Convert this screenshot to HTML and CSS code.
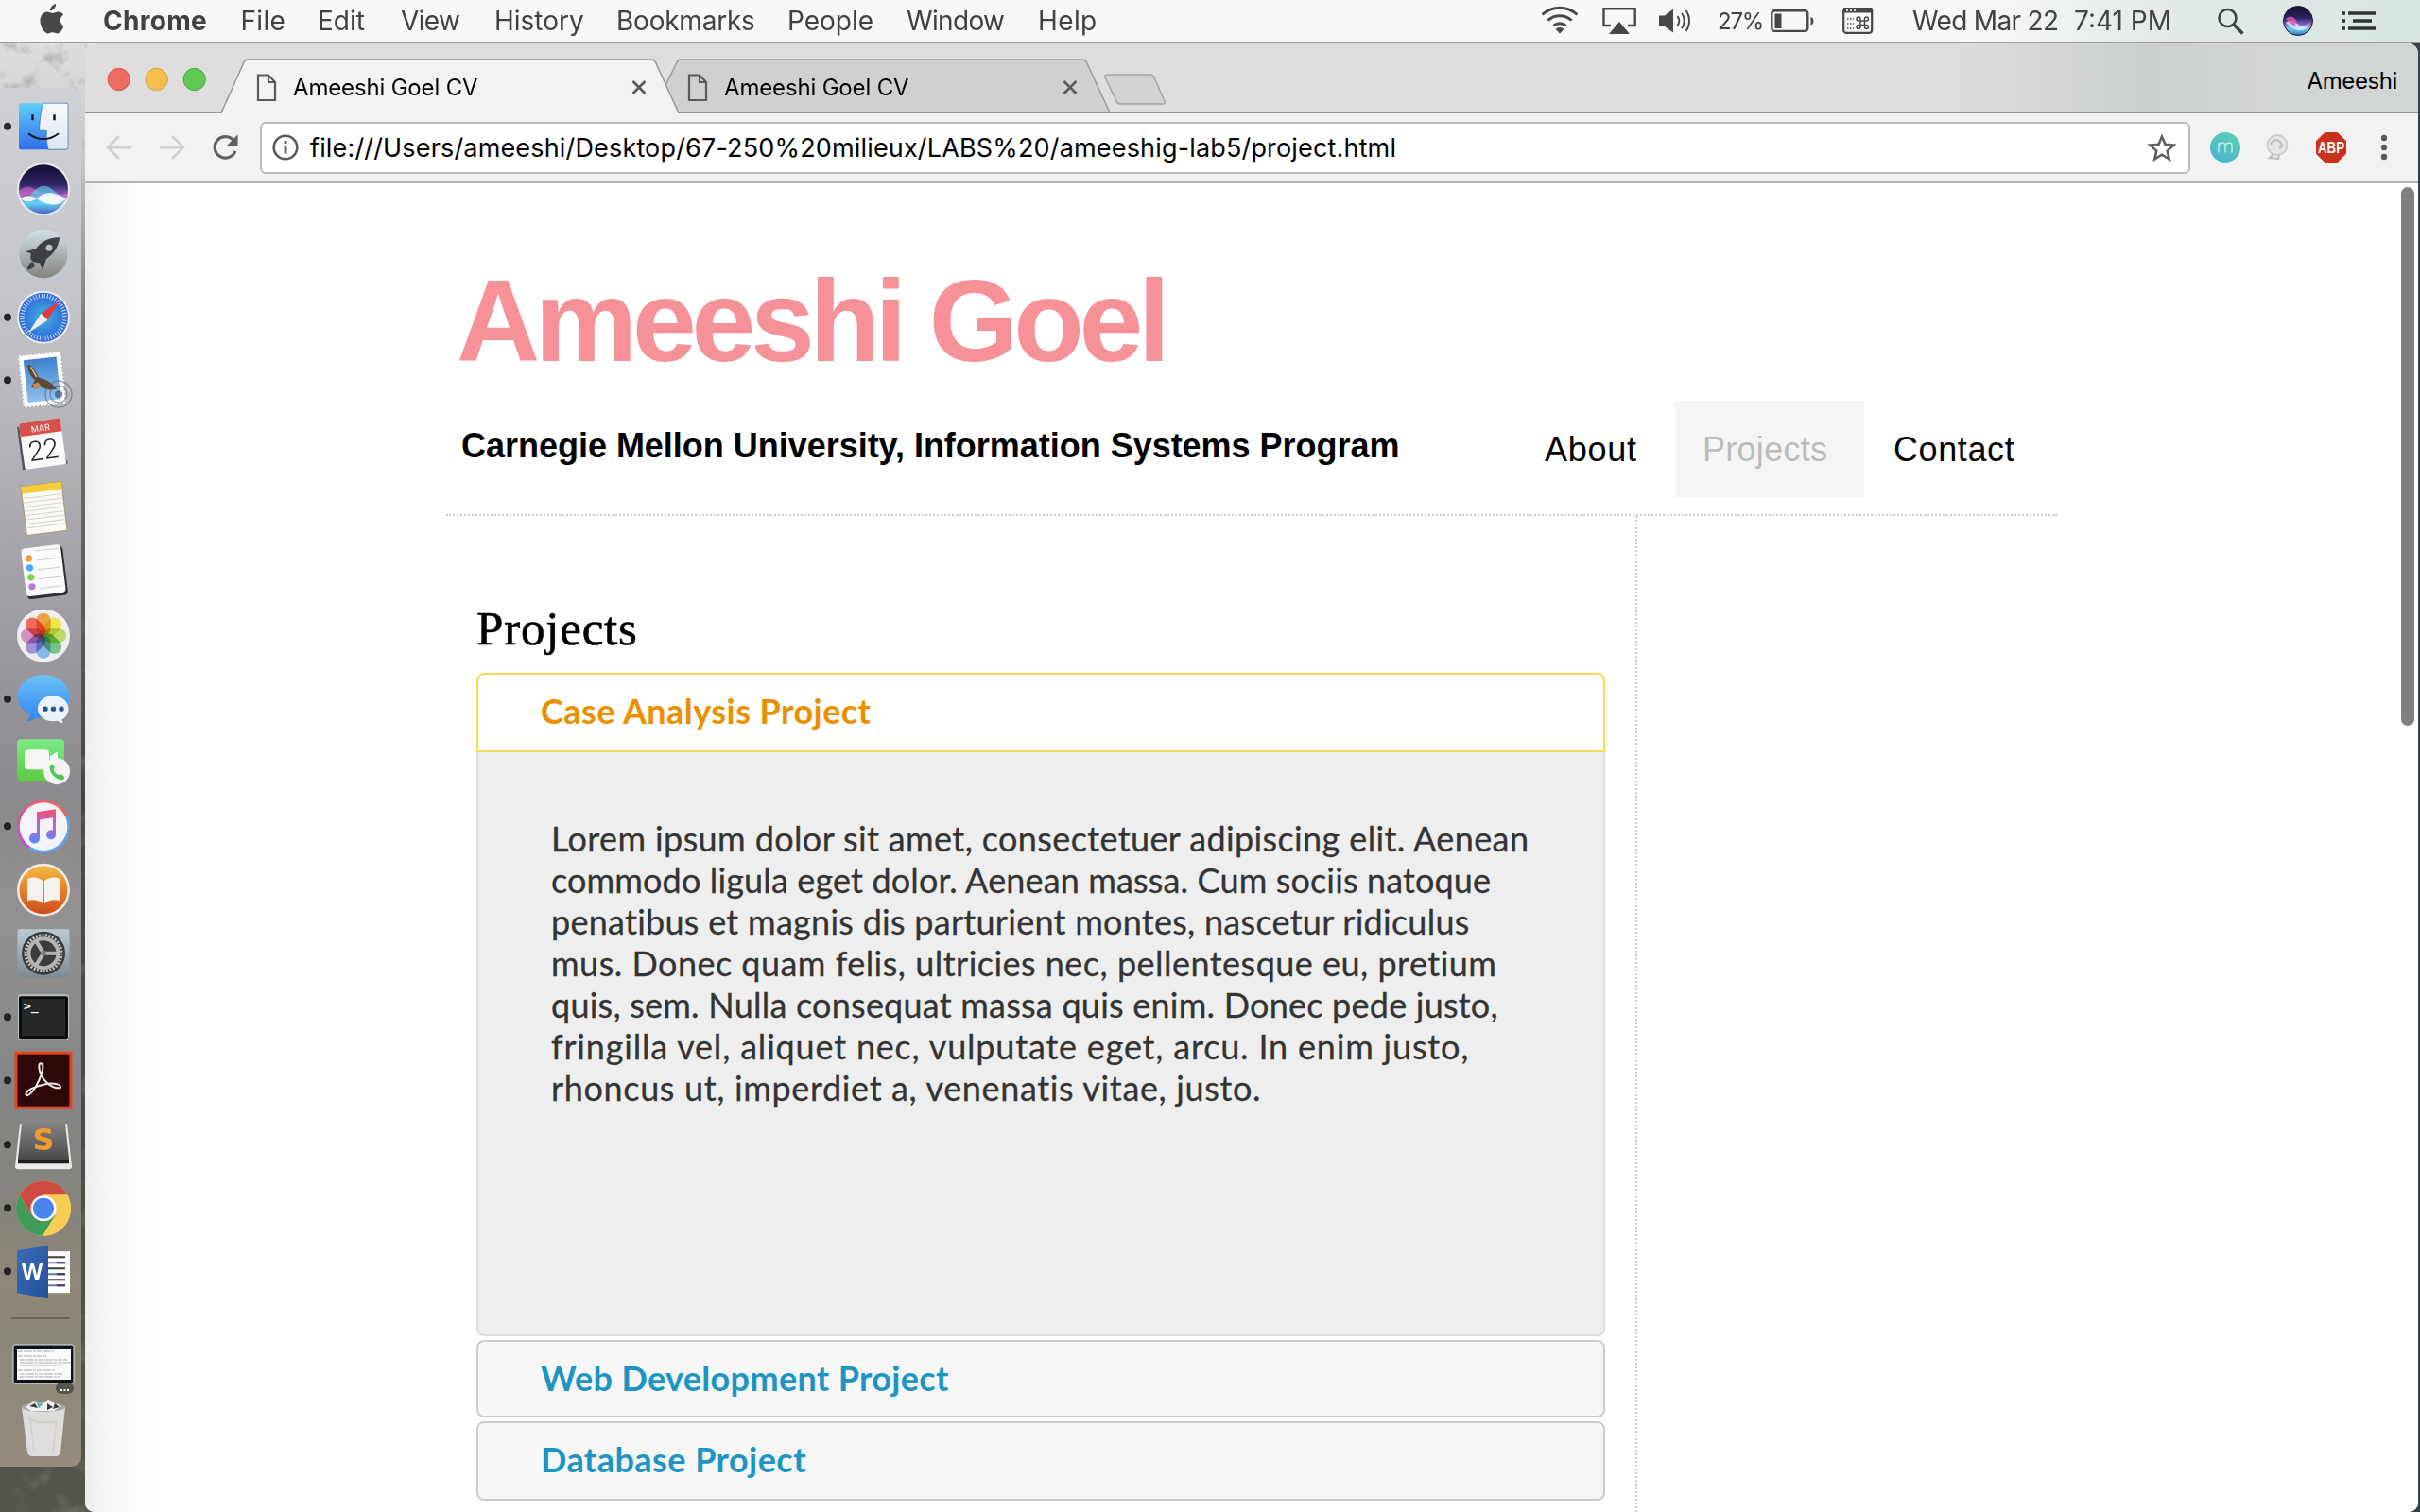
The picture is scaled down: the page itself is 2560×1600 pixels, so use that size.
FILE: index.html
```html
<!DOCTYPE html>
<html lang="en">
<head>
<meta charset="utf-8">
<title>Ameeshi Goel CV</title>
<link rel="stylesheet" href="styles.css">
</head>
<body>
<svg width="0" height="0" class="defs" aria-hidden="true">
  <defs>
    <linearGradient id="finder" x1="0" y1="0" x2="0" y2="1"><stop offset="0" stop-color="#5fcdfa"/><stop offset="1" stop-color="#2f6fea"/></linearGradient>
    <linearGradient id="finderR" x1="0" y1="0" x2="0" y2="1"><stop offset="0" stop-color="#f8f9fc"/><stop offset="1" stop-color="#dde6f2"/></linearGradient>
    <linearGradient id="siri" x1="0" y1="0" x2="0" y2="1"><stop offset="0" stop-color="#150c33"/><stop offset=".4" stop-color="#2a2260"/><stop offset=".62" stop-color="#8a5fc4"/><stop offset=".78" stop-color="#63d3f2"/><stop offset="1" stop-color="#4466c8"/></linearGradient>
    <linearGradient id="steel" x1="0" y1="0" x2="0" y2="1"><stop offset="0" stop-color="#d3e0e6"/><stop offset="1" stop-color="#84837f"/></linearGradient>
    <radialGradient id="safari"><stop offset="0" stop-color="#46b6d8"/><stop offset="1" stop-color="#2a63e0"/></radialGradient>
    <linearGradient id="sky" x1="0" y1="0" x2="0" y2="1"><stop offset="0" stop-color="#3f7fcf"/><stop offset="1" stop-color="#8fc2ee"/></linearGradient>
    <linearGradient id="msg" x1="0" y1="0" x2="0" y2="1"><stop offset="0" stop-color="#6cc3f6"/><stop offset="1" stop-color="#2f84f2"/></linearGradient>
    <linearGradient id="green" x1="0" y1="0" x2="0" y2="1"><stop offset="0" stop-color="#7bea86"/><stop offset="1" stop-color="#5acb43"/></linearGradient>
    <linearGradient id="ring" x1="0" y1="1" x2="1" y2="0"><stop offset="0" stop-color="#b34be6"/><stop offset=".5" stop-color="#e7548e"/><stop offset="1" stop-color="#f26a50"/></linearGradient>
    <linearGradient id="note" x1="0" y1="0" x2="0" y2="1"><stop offset="0" stop-color="#f0506a"/><stop offset=".5" stop-color="#b565d8"/><stop offset="1" stop-color="#4f8df5"/></linearGradient>
    <linearGradient id="book" x1="0" y1="0" x2="0" y2="1"><stop offset="0" stop-color="#f5b840"/><stop offset="1" stop-color="#d04c1c"/></linearGradient>
    <linearGradient id="prefs" x1="0" y1="0" x2="0" y2="1"><stop offset="0" stop-color="#bccbd3"/><stop offset="1" stop-color="#7f8992"/></linearGradient>
    <linearGradient id="sub" x1="0" y1="0" x2="0" y2="1"><stop offset="0" stop-color="#888"/><stop offset="1" stop-color="#4c4c4c"/></linearGradient>
    <linearGradient id="word" x1="0" y1="0" x2="1" y2="1"><stop offset="0" stop-color="#3d6cb8"/><stop offset="1" stop-color="#23509a"/></linearGradient>
    <linearGradient id="teal" x1="0" y1="1" x2=".6" y2="0"><stop offset="0" stop-color="#48b0d6"/><stop offset="1" stop-color="#58cdb0"/></linearGradient>
    <filter id="rough"><feTurbulence type="fractalNoise" baseFrequency=".035" numOctaves="4" seed="7"/><feColorMatrix values="0 0 0 0 .2  0 0 0 0 .2  0 0 0 0 .18  4 0 0 0 -2.2"/></filter>
  </defs>
</svg>

<header class="menubar">
  <svg class="apple" width="108" height="44" viewBox="0 0 108 44"><path fill="#474747" d="M59 4c.5 4-3 7.500-6 7.300C52.800 8 56 4.500 59 4zM67.500 27.500c-1.800 5-4.500 8-7 8-2 0-2.600-1.200-4.800-1.200S52.500 35.400 50.800 35.500c-3.600 0-8.300-7-8.300-13.500 0-6 3.600-9.500 7.500-9.500 2.300 0 4.100 1.500 5.600 1.500 1.400 0 3.600-1.600 6.300-1.600 2 0 4 1 5.300 3-4.800 2.800-4.100 9.800.3 12.100z"/></svg>
  <b class="m1">Chrome</b><span class="m2">File</span><span>Edit</span><span class="m3">View</span><span>History</span><span class="m4">Bookmarks</span><span>People</span><span class="m3">Window</span><span class="m5">Help</span>
  <svg width="42" height="44" viewBox="0 0 42 44"><g fill="none" stroke="#474747" stroke-width="3"><path d="M1.500 15.500a27 27 0 0 1 37 0M7.500 21.500a18.500 18.500 0 0 1 25 0M13.500 27.200a10 10 0 0 1 13 0"/></g><path fill="#474747" d="M20 35.500l-4.500-4.700a6.500 6.500 0 0 1 9 0z"/></svg>
  <svg width="38" height="44" viewBox="0 0 38 44"><path d="M9 27H1.500V9.200h33.200V27H27" fill="none" stroke="#474747" stroke-width="2.400"/><path d="M18 23l11 13H7z" fill="#474747"/></svg>
  <svg width="36" height="44" viewBox="0 0 36 44"><path d="M0 16.500h6L15 9.500v25L6 28H0z" fill="#474747"/><g fill="none" stroke="#474747" stroke-width="2"><path d="M19.500 17a8 8 0 0 1 0 10M24 14a13 13 0 0 1 0 16M28.500 11a19 19 0 0 1 0 22"/></g></svg>
  <span class="pct">27%</span>
  <svg width="48" height="44" viewBox="0 0 48 44"><rect x="1.300" y="11.300" width="38" height="21.600" rx="3" fill="none" stroke="#474747" stroke-width="2.400"/><path d="M4.500 14.500h7v15.500h-7zM42.500 18c4 1 4 7.500 0 8.500z" fill="#474747"/></svg>
  <svg width="34" height="44" viewBox="0 0 34 44"><rect x="1.200" y="9.200" width="30" height="25.600" rx="3" fill="none" stroke="#474747" stroke-width="2.200"/><path d="M1 8h30.500v5.500H1z" fill="#474747"/><path d="M4 11h2m2 0h2m2 0h2" stroke="#fff" stroke-width="1.600"/><path d="M5 20h7M5 25h7M5 30h7" stroke="#474747" stroke-width="1.500" stroke-dasharray="1.500 1.500"/><path d="M19 22h4.500v4.500H19zm0 0h-2a2 2 0 1 1 2-2zm4.500 0v-2a2 2 0 1 1 2 2zm0 4.500h2a2 2 0 1 1-2 2zm-4.500 0v2a2 2 0 1 1-2-2z" fill="none" stroke="#474747" stroke-width="1.500"/></svg>
  <span class="date">Wed Mar 22</span><span>7:41 PM</span>
  <svg width="30" height="44" viewBox="0 0 30 44"><circle cx="10.500" cy="19" r="9" fill="none" stroke="#3d4040" stroke-width="2.600"/><path d="M17 26l9.500 9.500" stroke="#3d4040" stroke-width="3.400"/></svg>
  <svg width="34" height="44" viewBox="0 0 34 44"><circle cx="16" cy="22" r="15.500" fill="url(#siri)" stroke="#1a1a30" stroke-width="1"/><path d="M3 24q6-5 12 1t14-1q-5 10-13 8T3 24z" fill="#dff6ff" opacity=".75"/><path d="M3 20q6-6 12 3l-3 5z" fill="#e05aa8" opacity=".8"/></svg>
  <svg width="40" height="44" viewBox="0 0 40 44"><path d="M6 14h29M11 22h20M6 30h29" stroke="#2d3333" stroke-width="3.600"/><path d="M0 14h3M0 22h3M0 30h3" stroke="#2d3333" stroke-width="3.600"/></svg>
</header>

<main class="desktop">
  <svg class="wall" width="92" height="1554"><rect width="92" height="1554" filter="url(#rough)" opacity=".45"/></svg>
  <nav class="dock">
    <svg viewBox="0 0 86 67"><circle class="dot" cx="8" cy="33.500" r="4"/><rect x="20" y="9" width="52" height="49" rx="2" fill="url(#finder)"/><path d="M46 9h24a2 2 0 0 1 2 2v45a2 2 0 0 1-2 2H51c-1.500-6-2-13-1.800-20H41.500C42 27 43 17 46 9z" fill="url(#finderR)" stroke="#2a5a9a" stroke-width=".6"/><path d="M34.500 21v6M57.500 21v6" stroke="#111" stroke-width="2.400"/><path d="M30 41q16 12 32 0" fill="none" stroke="#111" stroke-width="1.800"/></svg>
    <svg viewBox="0 0 86 67"><circle cx="46" cy="33" r="28" fill="#e9e9ee"/><circle cx="46" cy="33" r="26" fill="url(#siri)"/><path d="M20 35q8-9 20 0t32 2v6q-12 2-24-3t-27 1z" fill="#e56ac0" opacity=".55"/><path d="M30 42q14-20 26-8 8 6 15 10-18 10-41-2z" fill="#60d8f0" opacity=".6"/><path d="M21 43q9-6 18 0 8-7 16-6 8 2 15 6-8 8-16 6-8-1-15-6-9 6-18 0z" fill="#fff" opacity=".9"/></svg>
    <svg viewBox="0 0 86 67"><circle cx="46" cy="33.500" r="28" fill="#c3cacd"/><circle cx="46" cy="33.500" r="25.500" fill="url(#steel)"/><path d="M63 16c-12 0-20 5-25 12l-11 3 6 2c-1 3-1 5 0 7l2 2 7 1 3 7 4-11c8-6 13-13 14-23z" fill="#3c4044"/><circle cx="52" cy="27" r="3.500" fill="#b8c0c4"/><path d="M34 42c-3 1-5 4-5 8 4 0 7-2 8-5z" fill="#3c4044"/></svg>
    <svg viewBox="0 0 86 67"><circle class="dot" cx="8" cy="33.500" r="4"/><circle cx="46" cy="33.500" r="28" fill="#eceef0"/><circle cx="46" cy="33.500" r="26" fill="url(#safari)"/><circle cx="46" cy="33.500" r="22.500" fill="none" stroke="#cfe6f8" stroke-width="4.500" stroke-dasharray="1 1.950"/><path d="M63 16L50.500 36.500l-7-7z" fill="#e8383a"/><path d="M30 50l13.500-20.500 7 7z" fill="#eee"/></svg>
    <svg viewBox="0 0 86 67"><circle class="dot" cx="8" cy="33" r="4"/><g transform="rotate(-6 45 32)"><rect x="23" y="6" width="43" height="53" fill="#fff" stroke="#fff" stroke-width="2.500" stroke-dasharray="2 2"/><rect x="27" y="10" width="35" height="45" fill="url(#sky)"/><path d="M31 15c5 1 8 8 10 15 6 2 14 7 18 14-7 1-13-1-17-5-3 3-7 2-10 0 2-3 4-5 5-7-5-5-7-11-6-17z" fill="#5e4733"/><path d="M34 36l6-1 3 4-8 3z" fill="#c08a4e"/><path d="M34 18l5 11" stroke="#d8c8b0" stroke-width="1.500"/></g><g fill="none" stroke="#5c6472" stroke-width="1.300" opacity=".6"><circle cx="62" cy="48" r="14"/><circle cx="62" cy="48" r="9"/></g><circle cx="62" cy="48" r="4" fill="#3f5f90" opacity=".8"/></svg>
    <svg viewBox="0 0 86 67"><path d="M18 14l6 46 48-7-3-6z" fill="#4f565b"/><g transform="rotate(-8 45 32)"><rect x="23" y="8" width="44" height="49" rx="2" fill="#fafafa"/><path d="M23 10a2 2 0 0 1 2-2h40a2 2 0 0 1 2 2v12H23z" fill="#d7514b"/><text x="45" y="19" class="cal-m">MAR</text><text x="45" y="49" class="cal-d">22</text></g></svg>
    <svg viewBox="0 0 86 67"><g transform="rotate(-7 46 33)"><rect x="25" y="8" width="43" height="52" fill="#fbfaf5" stroke="#9b8a55" stroke-width=".8"/><path d="M25 8h43v8H25z" fill="#f6cb3c"/><path d="M25 21h43M25 25.500h43M25 30h43M25 34.500h43M25 39h43M25 43.500h43M25 48h43M25 52.500h43" stroke="#d2d2d0" stroke-width="1"/></g></svg>
    <svg viewBox="0 0 86 67"><g transform="rotate(-7 46 33)"><rect x="26" y="9" width="43" height="52" rx="4" fill="#2f2f33"/><rect x="25" y="7" width="42" height="51" rx="4" fill="#fbfbfb"/><circle cx="32" cy="18" r="3.600" fill="#f59b35"/><circle cx="32" cy="28" r="3.600" fill="#47a9f0"/><circle cx="32" cy="38" r="3.600" fill="#7cd653"/><circle cx="32" cy="48" r="3.600" fill="#bf77dd"/><path d="M40 11h24M40 21h24M40 31h24M40 41h24M40 51h24" stroke="#ccc" stroke-width="1"/></g></svg>
    <svg viewBox="0 0 86 67"><circle cx="46" cy="33.500" r="28" fill="#efefef"/><g transform="translate(46 33.500)" opacity=".92"><rect class="petal" x="-7.500" y="-24" width="15" height="24" rx="7.500" fill="#f29a38"/><rect class="petal" x="-7.500" y="-24" width="15" height="24" rx="7.500" fill="#efe23c" transform="rotate(45)"/><rect class="petal" x="-7.500" y="-24" width="15" height="24" rx="7.500" fill="#b9da5a" transform="rotate(90)"/><rect class="petal" x="-7.500" y="-24" width="15" height="24" rx="7.500" fill="#6cc088" transform="rotate(135)"/><rect class="petal" x="-7.500" y="-24" width="15" height="24" rx="7.500" fill="#7ab4e4" transform="rotate(180)"/><rect class="petal" x="-7.500" y="-24" width="15" height="24" rx="7.500" fill="#9a8bd4" transform="rotate(225)"/><rect class="petal" x="-7.500" y="-24" width="15" height="24" rx="7.500" fill="#d48ac0" transform="rotate(270)"/><rect class="petal" x="-7.500" y="-24" width="15" height="24" rx="7.500" fill="#ee5f50" transform="rotate(315)"/></g></svg>
    <svg viewBox="0 0 86 67"><circle class="dot" cx="8" cy="33.500" r="4"/><path d="M46 8c16 0 27.500 10 27.500 23S62 54 46 54c-3 0-6-.4-8-1-3 3-6 4-10 4 2-2 4-4 4-7-8-4-13-10-13-19C19 18 30 8 46 8z" fill="url(#msg)"/><path d="M56 30c9 0 16.500 6 16.500 14 0 5-3 9-7 11 0 2 .5 3 1.500 4-3 0-4-1-6-2.500-12 2-21-4-21-12.500 0-8 7-14 16-14z" fill="#eaf3fc"/><g fill="#27539a"><circle cx="48" cy="44" r="2.700"/><circle cx="56.500" cy="44" r="2.700"/><circle cx="65" cy="44" r="2.700"/></g></svg>
    <svg viewBox="0 0 86 67"><rect x="18" y="9" width="50" height="44" rx="4" fill="url(#green)"/><rect x="26" y="20" width="26" height="21" rx="4" fill="#f4f6f4"/><path d="M53 27l8-5v18l-8-5z" fill="#f4f6f4"/><circle cx="60" cy="43" r="14" fill="#f3f4f3"/><path d="M53 37c2-3 4 0 5 2l-1.500 2c1 3 3 5 6 6l2-1c2 1 5 3 3 5-6 4-17-7-14.500-14z" fill="#4fc450"/></svg>
    <svg viewBox="0 0 86 67"><circle class="dot" cx="8" cy="33" r="4"/><circle cx="46" cy="33.500" r="28" fill="url(#ring)"/><path d="M30 56.500A28 28 0 0 0 71 21z" fill="#58a8ee"/><circle cx="46" cy="33.500" r="25.300" fill="#f4f3f8"/><path d="M39 18l20-3v27a5 5 0 1 1-3-4.500V24l-14 2.300V46a5.500 5.500 0 1 1-3-5z" fill="url(#note)"/></svg>
    <svg viewBox="0 0 86 67"><circle cx="46" cy="33.500" r="28" fill="#f0ece8"/><circle cx="46" cy="33.500" r="25.500" fill="url(#book)"/><path d="M45.500 24c-4-4-12-5-16.500-2v23c5-2 12-1 16.500 3zM47 24c4-4 12-5 16.500-2v23c-5-2-12-1-16.500 3z" fill="#f5f2ee"/></svg>
    <svg viewBox="0 0 86 67"><rect x="18.500" y="8" width="55" height="51" rx="2" fill="url(#prefs)"/><circle cx="46" cy="33.500" r="23" fill="#3a3b3d"/><circle cx="46" cy="33.500" r="19" fill="none" stroke="#c4c4c2" stroke-width="3" stroke-dasharray="2 1.500"/><circle cx="46" cy="33.500" r="15.500" fill="none" stroke="#b4b4b2" stroke-width="4"/><path d="M46 33.500h15M46 33.500l-8-13M46 33.500l-8 13" stroke="#b4b4b2" stroke-width="4"/><circle cx="46" cy="33.500" r="3" fill="#7c7c7c"/></svg>
    <svg viewBox="0 0 86 67"><circle class="dot" cx="8" cy="33" r="4"/><rect x="19" y="9" width="54" height="48" rx="3" fill="#b9c2c6"/><rect x="20" y="11" width="52" height="45" rx="2" fill="#0b0b0b"/><rect x="23" y="14" width="46" height="39" fill="#262727"/><text x="25" y="26" class="term">&gt;_</text></svg>
    <svg viewBox="0 0 86 67"><circle class="dot" cx="8" cy="33" r="4"/><rect x="17" y="4" width="58" height="58" fill="#2d0807" stroke="#e8421f" stroke-width="3"/><path d="M43 15c3 0 3 5 1 11-3 9-9 21-15 23-3 0-2-4 4-7 8-4 20-7 27-5 6 2 5 5 0 4-8-1-16-10-18-18-1-4-1-8 1-8z" fill="none" stroke="#f3e9e7" stroke-width="2"/></svg>
    <svg viewBox="0 0 86 67"><circle class="dot" cx="8" cy="33" r="4"/><path d="M21 11h50l5 45q0 3-3 3H19q-3 0-3-3z" fill="#ecebea"/><path d="M23 10q1-3 4-3h38q3 0 4 3l4 38H19z" fill="url(#sub)"/><path d="M19 48h54v5H19z" fill="#1f1f1f"/><text x="46" y="39" class="subl">S</text></svg>
    <svg viewBox="0 0 86 67"><circle class="dot" cx="8" cy="33" r="4"/><circle cx="46" cy="33.500" r="29" fill="#f7cd55"/><path d="M20.900 19A29 29 0 0 0 45 62.500L58.500 40.800 33.500 40.800z" fill="#419c5b"/><path d="M58.500 40.800L45 62.500a29 29 0 0 0 26.100-43.500H46z" fill="#f7cd55"/><path d="M20.900 19a29 29 0 0 1 50.200 0H46v14L33.500 40.800z" fill="#cf4b41"/><circle cx="46" cy="33.500" r="13.500" fill="#fff"/><circle cx="46" cy="33.500" r="11" fill="#4a82ee"/></svg>
    <svg viewBox="0 0 86 67"><circle class="dot" cx="8" cy="33" r="4"/><rect x="46" y="12" width="28" height="44" fill="#fdfdfd"/><path d="M50 18h19M50 30h19M50 42h19" stroke="#453c40" stroke-width="2"/><path d="M50 24h19M50 36h19M50 48h19" stroke="#5c7ab8" stroke-width="2"/><path d="M60 24h9M60 36h9M60 48h9" stroke="#453c40" stroke-width="2"/><path d="M18 11l33-5v56l-33-6z" fill="url(#word)"/><text x="34" y="42" class="wordw">W</text></svg>
    <i class="sep"></i>
    <svg class="mini" viewBox="0 0 86 62"><rect x="14" y="7" width="64" height="41" rx="2" fill="#0c1218" stroke="#dfe5e8" stroke-width="1"/><rect x="18" y="11" width="57" height="33" fill="#fafafa"/><path d="M19 14h38M19 19h30M21 23h50M21 26h54M21 29h44M19 34h40M21 38h45M21 41h42" stroke="#a5a8ab" stroke-width="1" stroke-dasharray="5 1 9 1 3 1"/><rect x="59" y="47" width="19" height="12" rx="6" fill="#55534d"/><path d="M64 55h9" stroke="#fff" stroke-width="2" stroke-dasharray="2 1.500"/></svg>
    <svg class="mini" viewBox="0 0 86 67"><path d="M23 13h46l-5 48q-1 4-5 4H34q-4 0-5-4z" fill="#dedddb"/><ellipse cx="46" cy="13" rx="23" ry="5" fill="#a8a6a2"/><path d="M27 13l8-6 9 3 7-4 14 6-8 5H33z" fill="#f2f2f2"/><path d="M31 12l6-3 3 5zM50 9l6 4-6 3zM58 9l5 4-7 2z" fill="#37393f"/><path d="M39 9l6 1-4 4z" fill="#3fb2c8"/><path d="M30 24q8 8 30 4M36 60l-4-34M56 60l4-34" stroke="#d0cfcc" stroke-width="1.500" fill="none"/></svg>
  </nav>

  <section class="window">
    <div class="tabstrip">
      <svg class="tabs-bg" width="2468" height="74" viewBox="90 46 2468 74">
        <path d="M690 119L716 66q1.500-3 4-3h425q3 0 4.500 3L1174 119z" fill="#d0d0d0" stroke="#9a9a9a" stroke-width="1.500"/>
        <path d="M90 119.200h2468" stroke="#979797" stroke-width="1.800"/>
        <path d="M234 121l1-2L258 66q1.500-3 4-3h427q3 0 4.500 3L717 119l2 2z" fill="#f2f2f2"/>
        <path d="M234 119.500L258 66q1.500-3 4-3h427q3 0 4.500 3L718 119.500" fill="none" stroke="#979797" stroke-width="1.500"/>
        <path d="M1171 79h46q3 0 4 3l11 25q1 3-2 3h-45q-3 0-4-3l-12-25q-1-3 2-3z" fill="#d3d3d3" stroke="#a5a5a5" stroke-width="1.500"/>
        <g stroke-width="1"><circle cx="125.700" cy="84" r="11.700" fill="#ed6b60" stroke="#d5584e"/><circle cx="165.700" cy="84" r="11.700" fill="#f5bf4f" stroke="#d9a33a"/><circle cx="205.700" cy="84" r="11.700" fill="#62c655" stroke="#4dab41"/></g>
      </svg>
      <div class="tab"><svg width="22" height="30" viewBox="0 0 22 30"><path d="M2 2.500h11l7 7.500v19H2zM13 2.500V10h7" fill="none" stroke="#5a5a5a" stroke-width="2.200"/></svg><span class="title">Ameeshi Goel CV</span><svg width="16" height="16" viewBox="0 0 16 16"><path d="M1.500 2l13 13m0-13l-13 13" stroke="#5a5a5a" stroke-width="2.600"/></svg></div>
      <div class="tab"><svg width="22" height="30" viewBox="0 0 22 30"><path d="M2 2.500h11l7 7.500v19H2zM13 2.500V10h7" fill="none" stroke="#5a5a5a" stroke-width="2.200"/></svg><span class="title">Ameeshi Goel CV</span><svg width="16" height="16" viewBox="0 0 16 16"><path d="M1.500 2l13 13m0-13l-13 13" stroke="#5a5a5a" stroke-width="2.600"/></svg></div>
      <span class="profile">Ameeshi</span>
    </div>

    <div class="toolbar">
      <svg class="back" width="28" height="28" viewBox="0 0 28 28"><path d="M27 14H3M14 2L2 14l12 12" fill="none" stroke="#d0d0d0" stroke-width="2.800"/></svg>
      <svg class="fwd" width="28" height="28" viewBox="0 0 28 28"><path d="M1 14h24M14 2l12 12-12 12" fill="none" stroke="#d0d0d0" stroke-width="2.800"/></svg>
      <svg class="reload" width="30" height="30" viewBox="0 0 30 30"><path d="M23.500 8A11.300 11.300 0 1 0 25 19" fill="none" stroke="#5f5f5f" stroke-width="3.200"/><path d="M27.500 1.500V13H16z" fill="#5f5f5f"/></svg>
      <div class="omnibox">
        <svg width="28" height="28" viewBox="0 0 28 28"><circle cx="14" cy="14" r="12.300" fill="none" stroke="#5a5a5a" stroke-width="2.600"/><path d="M14 12.500v8M14 7v3" stroke="#5a5a5a" stroke-width="2.800"/></svg>
        <span class="url">file:///Users/ameeshi/Desktop/67-250%20milieux/LABS%20/ameeshig-lab5/project.html</span>
        <svg width="32" height="30" viewBox="0 0 32 30"><path d="M16 3.500l3.500 8.300 9 .8-6.800 6 2 8.800-7.700-4.700-7.700 4.700 2-8.800-6.800-6 9-.8z" fill="none" stroke="#5f5f5f" stroke-width="2.600"/></svg>
      </div>
      <svg class="ext1" width="34" height="34" viewBox="0 0 34 34"><circle cx="17" cy="17" r="16" fill="url(#teal)"/><path d="M10 22.500v-10.500m0 3.500q1-3.500 4-3.500 3 0 3 3.500v7m0-7q1-3.500 4-3.500 3 0 3 3.500v7" fill="none" stroke="#bdf0ea" stroke-width="1.500"/></svg>
      <svg class="ext2" width="28" height="30" viewBox="0 0 28 30"><circle cx="14" cy="12.500" r="10.500" fill="#e6e6e6" stroke="#cdcdcd" stroke-width="1.800"/><path d="M7 12a6 6 0 0 1 10-3q4 5-1 7M10 22l-4 4 9 1 1-4" fill="none" stroke="#c2c2c2" stroke-width="2.400"/></svg>
      <svg class="ext3" width="34" height="34" viewBox="0 0 34 34"><path d="M10.300 1h13.400L33 10.300v13.400L23.700 33H10.300L1 23.700V10.300z" fill="#c8321b"/><text x="17" y="23" class="abp" textLength="28" lengthAdjust="spacingAndGlyphs">ABP</text></svg>
      <svg class="more" width="8" height="28" viewBox="0 0 8 28"><circle cx="4" cy="4" r="3.200"/><circle cx="4" cy="14" r="3.200"/><circle cx="4" cy="24" r="3.200"/></svg>
    </div>

    <article class="page">
      <div class="wrap">
        <div class="head">
          <h1>Ameeshi Goel</h1>
          <div class="row">
            <h2>Carnegie Mellon University, Information Systems Program</h2>
            <div class="nav"><a class="about">About</a><a class="on">Projects</a><a class="contact">Contact</a></div>
          </div>
        </div>
        <div class="cols">
          <div class="left">
            <h3>Projects</h3>
            <div class="acc active">Case Analysis Project</div>
            <div class="panel">
              <p class="l1">Lorem ipsum dolor sit amet, consectetuer adipiscing elit. Aenean</p>
              <p class="l2">commodo ligula eget dolor. Aenean massa. Cum sociis natoque</p>
              <p class="l3">penatibus et magnis dis parturient montes, nascetur ridiculus</p>
              <p class="l4">mus. Donec quam felis, ultricies nec, pellentesque eu, pretium</p>
              <p class="l5">quis, sem. Nulla consequat massa quis enim. Donec pede justo,</p>
              <p class="l6">fringilla vel, aliquet nec, vulputate eget, arcu. In enim justo,</p>
              <p class="l7">rhoncus ut, imperdiet a, venenatis vitae, justo.</p>
            </div>
            <div class="acc">Web Development Project</div>
            <div class="acc last">Database Project</div>
          </div>
        </div>
      </div>
      <i class="scroll"></i>
    </article>
  </section>
</main>
</body>
</html>
```

FILE: styles.css
```css
* { box-sizing: border-box; }
body { margin: 0; width: 2560px; height: 1600px; overflow: hidden; background: #46463e; font-family: Inter, sans-serif; color: #000; }
.defs { position: absolute; }
svg { display: block; }
h1, h2, h3, p { margin: 0; font-weight: 400; white-space: nowrap; }

.menubar { display: grid; height: 46px; line-height: 45px; font-size: 28px; color: #414141; white-space: nowrap;
  grid-template-columns: 109px 145.5px 81.5px 88px 99px 129px 181px 126px 139px 532px 65px 60px 62px 56px 76px 74px 171px 152px 69px 63px 1fr;
  background: linear-gradient(90deg, #f8f8f8 2080px, #e2eae7 2290px, #d9e6e1 2560px);
  border-bottom: 2px solid #9b9c9b; }
.m1 { letter-spacing: .28px; }
.m2 { letter-spacing: .3px; }
.m3 { letter-spacing: -.65px; }
.m4 { letter-spacing: -.23px; }
.m5 { letter-spacing: .4px; }
.pct { font-size: 24px; letter-spacing: -1.2px; }
.date { letter-spacing: -.67px; }

.desktop { position: relative; display: flex; height: 1554px;
  background: linear-gradient(90deg, transparent 2550px, #354145 2550px), linear-gradient(#dedede, #c8c8c8 120px, #77797b 300px, #606265 520px, #42464a 800px, #4b4c48 1100px, #56554b 1554px); }
.wall { position: absolute; left: 0; top: 0; }

.dock { position: relative; display: flex; flex-direction: column; width: 86px; height: 1459px; margin: 47px 4px 0 0; padding-top: 7px; border-radius: 0 10px 10px 0;
  background: linear-gradient(#d0d1d5, #c4c5ca 220px, #b2b1b7 390px, #9c9aa0 580px, #8b898c 760px, #939190 880px, #858585 1060px, #86837b 1200px, #8f8778 1260px, #8b8778 1320px, #958c7b); }
.dock > svg { flex: none; width: 86px; height: 67.350px; }
.dot { fill: #151515; opacity: .9; }
.sep { flex: none; width: 62px; height: 2px; margin: 14px 0 20px 12px; background: #6a6459; }
.dock > .mini { height: 62px; }
.dock > .mini + .mini { height: 67px; margin-top: -2px; }
.petal { mix-blend-mode: multiply; }
.cal-m { font: 9px Inter, sans-serif; fill: #fff; text-anchor: middle; }
.cal-d { font: 300 29px Roboto, sans-serif; fill: #222; text-anchor: middle; }
.term { font: bold 13px "DejaVu Sans Mono", monospace; fill: #fff; }
.subl { font: bold 32px "DejaVu Sans", sans-serif; fill: #f59a2c; text-anchor: middle; }
.wordw { font: bold 23px "Open Sans", sans-serif; fill: #fff; text-anchor: middle; }

.window { position: relative; width: 2468px; height: 1554px; border-radius: 10px; overflow: hidden; background: #fff; }
.tabstrip { position: relative; display: flex; height: 74px; padding: 16px 22px 0 181px;
  background: linear-gradient(90deg, #dedede 1960px, #ccd0cf 2180px, #d3d5d5 2300px, #d1d5d5 2468px); }
.tabs-bg { position: absolute; left: 0; top: 0; }
.tab { position: relative; display: grid; grid-template-columns: 39px 358px 16px; width: 456px; height: 58px; align-items: center; }
.tab span { font-size: 24px; line-height: 58px; padding-top: 2px; letter-spacing: -.17px; }
.profile { margin-left: auto; font-size: 24px; line-height: 48px; letter-spacing: -.4px; }

.toolbar { position: relative; display: flex; align-items: center; height: 74px; padding-left: 22px; background: #f2f2f2; border-bottom: 2px solid #b3b3b3; }
.fwd { margin-left: 28px; }
.reload { margin-left: 28px; }
.omnibox { display: flex; align-items: center; width: 2042px; height: 55px; margin-left: 21px; padding: 0 12px 0 11px; border: 2px solid #bcbcbc; border-radius: 6px; background: #fff; }
.url { flex: 1; margin-left: 12px; padding-top: 2px; font-size: 27px; line-height: 50px; letter-spacing: .165px; white-space: nowrap; }
.ext1 { margin-left: 20px; }
.ext2 { margin-left: 24px; }
.ext3 { margin-left: 26px; }
.abp { font: bold 17px "Liberation Sans", sans-serif; fill: #fff; text-anchor: middle; }
.more { margin-left: 35px; fill: #5a5a5a; }

.page { position: relative; height: 1406px; background: linear-gradient(90deg, #eee, #f8f8f8 32px, #fdfdfd 60px, #fff 84px); }
.wrap { width: 1704px; margin-left: 382px; }
.head { height: 352px; padding: 76px 0 0 16px; border-bottom: 2px dotted #ccc; }
h1 { font: bold 122px/140px "Liberation Sans", sans-serif; letter-spacing: -5.340px; color: #f79198; margin-left: -5px; }
.row { display: flex; align-items: flex-start; margin-top: 14px; }
h2 { width: 1146px; font: bold 36px/95px "Liberation Sans", sans-serif; letter-spacing: -.02px; }
.nav { display: flex; height: 102px; font: 36px/104px "Liberation Sans", sans-serif; }
.about { width: 138px; letter-spacing: .73px; }
.on { width: 200px; padding-left: 29px; background: #f5f5f5; color: #bbb; letter-spacing: .28px; }
.contact { margin-left: 31px; letter-spacing: .6px; }
.left { width: 1260px; height: 1054px; padding: 86px 32px 0 32px; border-right: 2px dotted #ccc; }
h3 { height: 80px; font: 51px/66px "Liberation Serif", serif; letter-spacing: .8px; -webkit-text-stroke: .6px #000; }
.acc { height: 82px; margin-top: 4px; padding-left: 66px; border: 2px solid #ccc; border-radius: 8px; background: #f6f6f6; color: #1c94c4; font: bold 36px/77px Lato, sans-serif; letter-spacing: .34px; }
.active { height: 84px; margin-top: 0; border-color: #fbd850; border-radius: 8px 8px 0 0; background: #fff; color: #eb8f00; letter-spacing: .45px; }
.last { height: 84px; letter-spacing: .45px; }
.panel { height: 618px; padding: 69px 0 0 77px; border: 2px solid #ddd; border-top: 0; border-radius: 0 0 8px 8px; background: #eee; color: #333; font: 36px/44px Lato, sans-serif; -webkit-text-stroke: .3px #333; }
.l1 { letter-spacing: .38px; }
.l2 { letter-spacing: .14px; }
.l3 { letter-spacing: .27px; }
.l4 { letter-spacing: .48px; }
.l5 { letter-spacing: .23px; }
.l6 { letter-spacing: .81px; }
.l7 { letter-spacing: .65px; }
.scroll { position: absolute; left: 2450px; top: 4px; width: 14px; height: 570px; border-radius: 7px; background: #808080; }
```
